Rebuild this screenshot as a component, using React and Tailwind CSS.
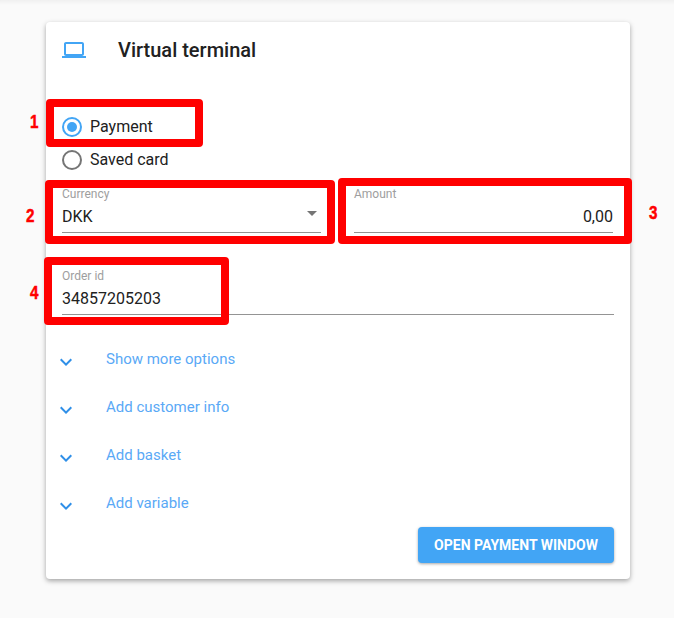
import React from "react";

function Radio({ checked, label }) {
  return (
    <div className="flex items-center h-[33px]">
      <span className={`w-5 h-5 rounded-full border-2 flex items-center justify-center ${checked ? "border-[#42a5f5]" : "border-[#757575]"}`}>
        {checked && <span className="w-[10px] h-[10px] rounded-full bg-[#42a5f5]" />}
      </span>
      <span className="ml-2 text-base text-[#212121]">{label}</span>
    </div>
  );
}

function Field({ label, value, right, caret, className }) {
  return (
    <div className={`relative border-b border-[#949494] h-[49px] ${className}`}>
      <div className="text-xs leading-[14px] text-[#9e9e9e] pt-[3px] h-[17px]">{label}</div>
      <div className={`text-base leading-5 text-[#212121] mt-[6px] ${right ? "text-right" : ""}`}>{value}</div>
      {caret && <span className="absolute right-[4px] top-[27px] w-0 h-0 border-x-[5px] border-x-transparent border-t-[5px] border-t-[#757575]" />}
    </div>
  );
}

function Row({ label }) {
  return (
    <div className="flex items-start h-12">
      <svg className="mt-[15px] -ml-2 shrink-0" width="24" height="24" viewBox="0 0 24 24" fill="#2f8fe8">
        <path d="M7.41 8.59 12 13.17l4.59-4.58L18 10l-6 6-6-6z" />
      </svg>
      <span className="ml-7 mt-[14px] text-[15px] leading-5 text-[#5aa9f6]">{label}</span>
    </div>
  );
}

function Box({ className }) {
  return <div className={`absolute border-8 border-[#ff0000] rounded-[4px] ${className}`} />;
}

function Num({ children, className }) {
  return (
    <div className={`absolute text-[#ff0000] text-[19px] leading-5 font-bold scale-x-[0.8] [-webkit-text-stroke:0.5px_#ff0000] font-['Liberation_Sans',sans-serif] ${className}`}>
      {children}
    </div>
  );
}

export default function App() {
  return (
    <div className="relative w-[674px] h-[618px] overflow-hidden bg-[#fafafa] font-['Roboto',sans-serif] pt-[22px]">
      <div className="absolute top-0 left-0 w-full h-[5px] bg-gradient-to-b from-[#f0f0f0] to-[#fafafa]" />
      <div className="relative ml-[46px] w-[584px] h-[557px] bg-white rounded-[4px] shadow-[0_2px_5px_rgba(0,0,0,0.35)] px-4">
        <div className="flex items-center h-14">
          <svg width="24" height="24" viewBox="0 0 24 24" fill="#42a5f5" className="shrink-0">
            <path d="M20 18c1.1 0 1.99-.9 1.99-2L22 6c0-1.1-.9-2-2-2H4c-1.1 0-2 .9-2 2v10c0 1.1.9 2 2 2H0v2h24v-2h-4zM4 6h16v10H4V6z" />
          </svg>
          <h1 className="ml-8 text-xl font-medium text-[#212121]">Virtual terminal</h1>
        </div>
        <div className="mt-8">
          <Radio checked label="Payment" />
          <Radio label="Saved card" />
        </div>
        <div className="flex gap-[33px] pr-px mt-2">
          <Field label="Currency" value="DKK" caret className="flex-1" />
          <Field label="Amount" value="0,00" right className="flex-1" />
        </div>
        <Field label="Order id" value="34857205203" className="mt-[33px]" />
        <div className="mt-5">
          <Row label="Show more options" />
          <Row label="Add customer info" />
          <Row label="Add basket" />
          <Row label="Add variable" />
        </div>
        <div className="flex justify-end">
          <button className="w-[196px] h-9 bg-[#42a5f5] text-white text-sm font-bold rounded-[4px] shadow-[0_1px_3px_rgba(0,0,0,0.35)] uppercase">
            Open payment window
          </button>
        </div>
      </div>
      <Box className="left-[46px] top-[99px] w-[157px] h-[48px]" />
      <Box className="left-[45px] top-[180px] w-[290px] h-[64px]" />
      <Box className="left-[338px] top-[178px] w-[294px] h-[66px]" />
      <Box className="left-[44px] top-[257px] w-[185px] h-[68px]" />
      <Num className="left-[29px] top-[112px]">1</Num>
      <Num className="left-[25px] top-[206px]">2</Num>
      <Num className="left-[648px] top-[203px]">3</Num>
      <Num className="left-[29px] top-[283px]">4</Num>
    </div>
  );
}
